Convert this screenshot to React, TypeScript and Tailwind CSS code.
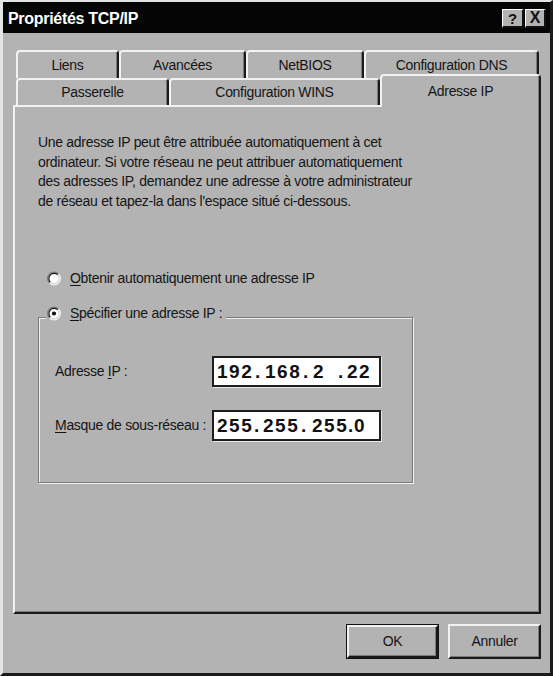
const FONT = "font-['Liberation_Sans',Arial,sans-serif]";

function Radio({ checked }: { checked?: boolean }) {
  return (
    <svg width="14" height="15" viewBox="0 0 12 12" className="shrink-0">
      <circle cx="6" cy="6" r="5" fill="#ffffff" />
      <path d="M2.11 9.89 A5.5 5.5 0 0 1 9.89 2.11" fill="none" stroke="#7a7a7a" strokeWidth="1" />
      <path d="M2.82 9.18 A4.5 4.5 0 0 1 9.18 2.82" fill="none" stroke="#111111" strokeWidth="1" />
      <path d="M9.89 2.11 A5.5 5.5 0 0 1 2.11 9.89" fill="none" stroke="#f4f4f4" strokeWidth="1" />
      <path d="M9.18 2.82 A4.5 4.5 0 0 1 2.82 9.18" fill="none" stroke="#d8d8d8" strokeWidth="1" />
      {checked && <circle cx="6" cy="6" r="1.8" fill="#111111" />}
    </svg>
  );
}

function Tab({ className, label }: { className: string; label: string }) {
  return (
    <div
      className={`h-full flex items-center justify-center border-t-2 border-l-2 border-r-2 border-t-[#f2f2f2] border-l-[#f2f2f2] border-r-[#1a1a1a] rounded-t-[4px] shadow-[inset_-1px_0_0_#7a7a7a] ${className}`}
    >
      {label}
    </div>
  );
}

function Cells({ parts }: { parts: [string, string][] }) {
  return (
    <div className="flex h-full items-center pl-[3px] text-[19px] font-bold tracking-[1.5px] text-[#111] whitespace-pre leading-none">
      {parts.map(([t, w], i) => (
        <span key={i} className={`${w} shrink-0`}>
          {t}
        </span>
      ))}
    </div>
  );
}

function Win95Button({ label, isDefault }: { label: string; isDefault?: boolean }) {
  return (
    <div className={`w-[93px] h-[35px] ${isDefault ? "border border-[#111]" : ""}`}>
      <div className="w-full h-full flex items-center justify-center border-t-2 border-l-2 border-t-[#f2f2f2] border-l-[#f2f2f2] border-r-2 border-b-2 border-r-[#1a1a1a] border-b-[#1a1a1a] shadow-[inset_-1px_-1px_0_#7a7a7a]">
        {label}
      </div>
    </div>
  );
}

export default function App() {
  return (
    <div
      className={`${FONT} text-[14px] tracking-[-0.3px] text-[#151515] w-[553px] h-[676px] flex flex-col bg-[#b3b3b3] border-t-2 border-l-[3px] border-r-[3px] border-b-[3px] border-t-[#e4e4e4] border-l-[#e4e4e4] border-r-[#1a1a1a] border-b-[#1a1a1a] overflow-hidden`}
    >
      {/* Title bar */}
      <div className="h-[31px] shrink-0 bg-[#050505] flex items-center pl-[5px] pr-[4px]">
        <span className="text-white font-bold text-[16px] leading-none pt-[3px]">Propriétés TCP/IP</span>
        <div className="ml-auto flex gap-[1px] pt-[2px]">
          <div className="w-[22px] h-[19px] flex items-center justify-center bg-[#b3b3b3] border-t border-l border-t-white border-l-white border-r-2 border-b-2 border-r-[#111] border-b-[#111] font-bold text-[15px] leading-none text-[#111]">
            ?
          </div>
          <div className="w-[21px] h-[19px] flex items-center justify-center bg-[#b3b3b3] border-t border-l border-t-white border-l-white border-r-2 border-b-2 border-r-[#111] border-b-[#111] font-bold text-[16px] leading-none text-[#111]">
            X
          </div>
        </div>
      </div>

      {/* Tabs and panel */}
      <div className="pl-[10px] pt-[17px]">
        <div className="w-[528px]">
          <div className="flex h-[28px] ml-[3px]">
            <Tab className="w-[103px]" label="Liens" />
            <Tab className="w-[127px]" label="Avancées" />
            <Tab className="w-[118px]" label="NetBIOS" />
            <Tab className="w-[175px]" label="Configuration DNS" />
          </div>
          <div className="flex h-[27px] ml-[3px] items-start">
            <Tab className="w-[153px]" label="Passerelle" />
            <Tab className="w-[211px]" label="Configuration WINS" />
            <div className="relative z-10 -mt-[4px] h-[33px] w-[161px] bg-[#b3b3b3] flex justify-center pt-[5px] border-t-2 border-l-2 border-r-2 border-t-[#f2f2f2] border-l-[#f2f2f2] border-r-[#1a1a1a] rounded-t-[4px] shadow-[inset_-1px_0_0_#7a7a7a]">
              Adresse IP
            </div>
          </div>

          <div className="h-[509px] border-2 border-t-[#f2f2f2] border-l-[#f2f2f2] border-r-[#1a1a1a] border-b-[#1a1a1a] shadow-[inset_-1px_-1px_0_#7a7a7a] flex flex-col pl-[23px] pt-[26px]">
            <p className="leading-[19.5px] whitespace-nowrap">
              Une adresse IP peut être attribuée automatiquement à cet
              <br />
              ordinateur. Si votre réseau ne peut attribuer automatiquement
              <br />
              des adresses IP, demandez une adresse à votre administrateur
              <br />
              de réseau et tapez-la dans l'espace situé ci-dessous.
            </p>

            <div className="mt-[57px] ml-[9px] h-[20px] flex items-center gap-[9px]">
              <Radio />
              <span>
                <span className="underline underline-offset-2">O</span>btenir automatiquement une adresse IP
              </span>
            </div>

            <div className="relative mt-[29px] w-[375px] h-[166px] border border-[#7a7a7a] shadow-[1px_1px_0_#f2f2f2,inset_1px_1px_0_#f2f2f2] pt-[38px]">
              <div className="absolute left-[7px] -top-[15px] h-[20px] flex items-center gap-[9px] bg-[#b3b3b3] pl-[1px] pr-[4px]">
                <Radio checked />
                <span>
                  <span className="underline underline-offset-2">S</span>pécifier une adresse IP :
                </span>
              </div>

              <div className="flex items-center h-[31px]">
                <span className="w-[173px] pl-[16px] shrink-0 whitespace-nowrap">
                  Adresse <span className="underline underline-offset-2">I</span>P :
                </span>
                <div className="w-[169px] h-[31px] bg-white border-2 border-[#1e1e1e] shadow-[1px_1px_0_#e8e8e8]">
                  <Cells
                    parts={[
                      ["192", "w-[38px]"],
                      [".", "w-[10px]"],
                      ["168", "w-[38px]"],
                      [".", "w-[10px]"],
                      ["2", "w-[25px]"],
                      [".", "w-[9px]"],
                      ["22", "w-[30px]"],
                    ]}
                  />
                </div>
              </div>

              <div className="flex items-center h-[31px] mt-[23px]">
                <span className="w-[173px] pl-[16px] shrink-0 whitespace-nowrap">
                  <span className="underline underline-offset-2">M</span>asque de sous-réseau :
                </span>
                <div className="w-[169px] h-[31px] bg-white border-2 border-[#1e1e1e] shadow-[1px_1px_0_#e8e8e8]">
                  <Cells
                    parts={[
                      ["255", "w-[37px]"],
                      [".", "w-[9px]"],
                      ["255", "w-[38px]"],
                      [".", "w-[11px]"],
                      ["255", "w-[36px]"],
                      [".", "w-[6px]"],
                      ["0", "w-[20px]"],
                    ]}
                  />
                </div>
              </div>
            </div>
          </div>
        </div>
      </div>

      {/* Bottom buttons */}
      <div className="mt-[10px] flex justify-end gap-[9px] pr-[9px]">
        <Win95Button label="OK" isDefault />
        <Win95Button label="Annuler" />
      </div>
    </div>
  );
}
